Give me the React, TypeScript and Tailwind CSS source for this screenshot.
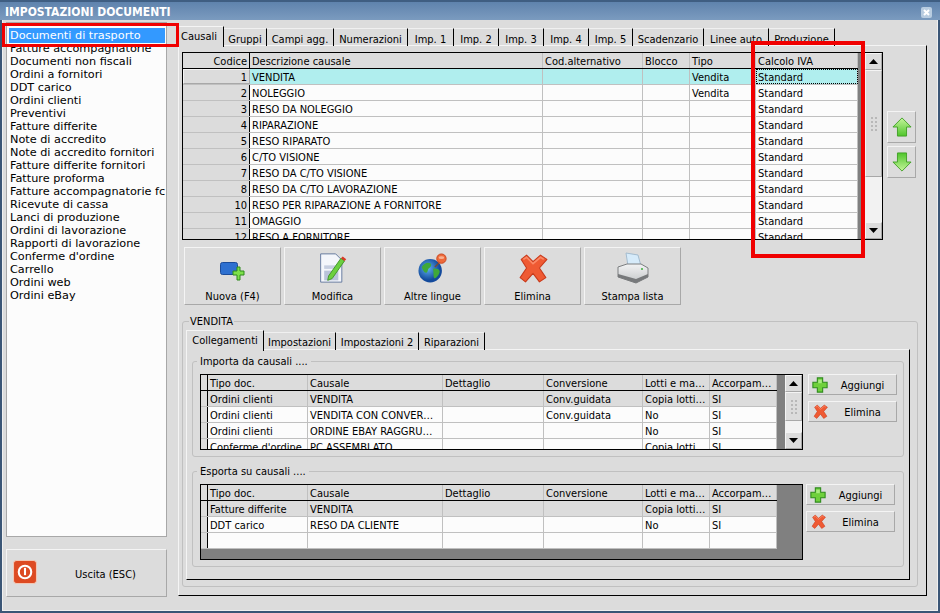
import React from "react";

const docs = ["Fatture accompagnatorie","Documenti non fiscali","Ordini a fornitori","DDT carico","Ordini clienti","Preventivi","Fatture differite","Note di accredito","Note di accredito fornitori","Fatture differite fornitori","Fatture proforma","Fatture accompagnatorie fc","Ricevute di cassa","Lanci di produzione","Ordini di lavorazione","Rapporti di lavorazione","Conferme d'ordine","Carrello","Ordini web","Ordini eBay"];
const tabs: [string, number][] = [["Causali",46],["Gruppi",43],["Campi agg.",67],["Numerazioni",74],["Imp. 1",46],["Imp. 2",45],["Imp. 3",45],["Imp. 4",45],["Imp. 5",44],["Scadenzario",71],["Linee auto",65],["Produzione",66]];
const inner: [string, number][] = [["Collegamenti",78],["Impostazioni",72],["Impostazioni 2",83],["Riparazioni",66]];
const rows: [string,string,string,string][] = [["1","VENDITA","Vendita","Standard"],["2","NOLEGGIO","Vendita","Standard"],["3","RESO DA NOLEGGIO","","Standard"],["4","RIPARAZIONE","","Standard"],["5","RESO RIPARATO","","Standard"],["6","C/TO VISIONE","","Standard"],["7","RESO DA C/TO VISIONE","","Standard"],["8","RESO DA C/TO LAVORAZIONE","","Standard"],["10","RESO PER RIPARAZIONE A FORNITORE","","Standard"],["11","OMAGGIO","","Standard"],["12","RESO A FORNITORE","","Standard"]];
const sub1 = [["Ordini clienti","VENDITA","","Conv.guidata","Copia lotti…","SI"],["Ordini clienti","VENDITA CON CONVER…","","Conv.guidata","No","SI"],["Ordini clienti","ORDINE EBAY RAGGRU…","","","No","SI"],["Conferme d'ordine","PC ASSEMBLATO","","","Copia lotti…","SI"]];
const sub2 = [["Fatture differite","VENDITA","","","Copia lotti…","SI"],["DDT carico","RESO DA CLIENTE","","","No","SI"],["","","","","",""]];
const subHead = ["Tipo doc.","Causale","Dettaglio","Conversione","Lotti e ma…","Accorpam…"];
const subW = [100,135,101,99,67,67];
const topW = [67,293,100,47,66,102];
const raised = "border border-t-[#f4f4f4] border-l-[#f4f4f4] border-r-[#a8a8a8] border-b-[#a8a8a8] bg-[#dcdcdc]";

function Plus({s=18}:{s?:number}){return <svg width={s} height={s} viewBox="0 0 18 18"><path d="M6 1h6v5h5v6h-5v5H6v-5H1V6h5z" fill="#6fd03c" stroke="#2e8a1c" strokeWidth="1.2"/><path d="M7 3h4v4h-4z" fill="#a8ec80"/></svg>;}
function Cross({s=18}:{s?:number}){return <svg width={s} height={s} viewBox="0 0 28 28"><path d="M3 6L8 2L14 8L21 2L27 6L20 14L26 23L20 27L14 19L7 27L2 23L8 14Z" fill="#ef5a33" stroke="#c8391a" strokeWidth="1" strokeLinejoin="round"/><path d="M5 6L8 4L14 10L21 4L24 6" fill="none" stroke="#fb8a68" strokeWidth="1.5"/></svg>;}
function Arrow({down}:{down?:boolean}){return <svg width="20" height="20" viewBox="0 0 22 22" style={down?{transform:"scaleY(-1)"}:undefined}><defs><linearGradient id="ga" x1="0" y1="0" x2="0" y2="1"><stop offset="0" stopColor="#c6f59c"/><stop offset="1" stopColor="#4fc52b"/></linearGradient></defs><path d="M11 1l10 10h-5v10H6V11H1z" fill="url(#ga)" stroke="#3f9f24"/></svg>;}
function Scroll({h,thumbTop,thumbH}:{h:number;thumbTop:number;thumbH:number}){return(
  <div className="w-[18px] flex flex-col bg-[#f2f2f2] shrink-0 relative border-l border-[#808080]" style={{height:h}}>
    <div className={`${raised} h-[17px] flex items-center justify-center`}><svg width="9" height="5"><path d="M4.5 0L9 5H0z" fill="#000"/></svg></div>
    <div className="flex-1 flex flex-col"><div style={{height:thumbTop}}/><div className={`${raised} flex items-center justify-center`} style={{height:thumbH}}><div className="grid grid-cols-2 gap-[2px]">{Array.from({length:8}).map((_,i)=><div key={i} className="w-[2px] h-[2px] bg-[#b8b8b8]"/>)}</div></div></div>
    <div className={`${raised} h-[17px] flex items-center justify-center`}><svg width="9" height="5"><path d="M4.5 5L9 0H0z" fill="#000"/></svg></div>
  </div>);}
function SmallBtn({icon,label}:{icon:React.ReactNode;label:string}){return <div className={`${raised} w-[89px] h-[21px] flex items-center relative`}><span className="ml-[3px] w-[16px] flex justify-center">{icon}</span><span className="flex-1 text-center pl-[1px] pt-[2px]">{label}</span></div>;}
function SubGrid({data,scroll}:{data:string[][];scroll:boolean}){return(
  <div className="flex w-[603px] h-[76px] border border-black bg-[#808080] overflow-hidden shrink-0">
    <div className="w-[576px] shrink-0 h-[74px] overflow-hidden">
      <div className="flex h-[16px] border-b border-black bg-[#dcdcdc]"><div className="w-[7px] border-r border-black shrink-0"/>{subHead.map((t,i)=><div key={i} className="border-r border-[#c0c0c0] px-[2px] pt-[1px] overflow-hidden whitespace-nowrap shrink-0" style={{width:subW[i]}}>{t}</div>)}</div>
      {data.map((r,j)=><div key={j} className={`flex h-[16px] border-b border-[#c0c0c0] ${j===0?"bg-[#dcdcdc]":"bg-[#fcfcfc]"}`}><div className="w-[7px] border-r border-black shrink-0 bg-[#dcdcdc]"/>{r.map((t,i)=><div key={i} className="border-r border-[#c0c0c0] px-[2px] pt-[1px] overflow-hidden whitespace-nowrap shrink-0" style={{width:subW[i]}}>{t}</div>)}</div>)}
    </div>
    <div className="flex-1"/>
    {scroll && <Scroll h={74} thumbTop={0} thumbH={29}/>}
  </div>);}
function Group({title,children}:{title:string;children:React.ReactNode}){return <fieldset className="border border-[#c0c0c0] rounded-[3px] w-[712px] h-[103px] pl-[7px] pt-[5px] shrink-0"><legend className="-ml-[3px] px-[3px]">{title}</legend>{children}</fieldset>;}

export default function App(){return(
<div className="w-[940px] h-[613px] flex flex-col bg-[#3b5676] text-[11px] leading-[15px] text-black overflow-hidden relative" style={{fontFamily:'"DejaVu Sans Condensed","DejaVu Sans",sans-serif'}}>
  <div className="h-[20px] shrink-0 flex items-center justify-between pl-[5px] pr-[8px] bg-gradient-to-b from-[#5f83ad] to-[#7b9bbf] border-t-2 border-[#3f5e82]">
    <span className="text-white font-bold text-[12px] pt-[2px]">IMPOSTAZIONI DOCUMENTI</span>
    <svg className="mt-[2px]" width="11" height="11" viewBox="0 0 11 11"><rect width="11" height="11" rx="2" fill="#b8cce0"/><path d="M3 3l5 5M8 3l-5 5" stroke="#fff" strokeWidth="2"/></svg>
  </div>
  <div className="flex-1 mx-[2px] mb-[2px] bg-[#dcdcdc] flex pt-[2px] pl-[3px] pr-[10px] border-x border-b border-[#f0f0f0]">
    <div className="w-[161px] shrink-0 flex flex-col">
      <div className="h-[515px] shrink-0 bg-[#fcfcfc] border border-[#a8a8a8] pt-[5px] pl-[2px] overflow-hidden text-[11.25px]" style={{fontFamily:'"DejaVu Sans",sans-serif'}}>
        <div className="h-[15px] -mb-[1px] mr-[1px] bg-[#3399ff] text-white pl-[1px] leading-[15px] relative z-10 whitespace-nowrap">Documenti di trasporto</div>
        {docs.map(d=><div key={d} className="h-[13px] leading-[13px] pl-[1px] whitespace-nowrap overflow-hidden">{d}</div>)}
      </div>
      <div className={`${raised} mt-[12px] h-[48px] shrink-0 flex items-center pl-[6px]`}>
        <svg className="-mt-[2px]" width="24" height="24" viewBox="0 0 23 23"><rect x="0.5" y="0.5" width="22" height="22" rx="3" fill="#dd4a22" stroke="#f2c6b4"/><circle cx="11.5" cy="11.5" r="6" fill="none" stroke="#fff" strokeWidth="2"/><path d="M11.5 7.5v7" stroke="#fff" strokeWidth="2"/></svg>
        <span className="flex-1 text-center pl-[8px] pt-[2px]">Uscita (ESC)</span>
      </div>
    </div>
    <div className="ml-[11px] w-[749px] flex flex-col pt-[4px] pb-[14px]">
      <div className="flex h-[20px] shrink-0 -mb-[1px] relative z-10">
        {tabs.map(([t,w],i)=><div key={t} className={`text-center whitespace-nowrap shrink-0 border-r border-black ${i===0?"bg-[#dcdcdc] border-t border-l border-t-[#f4f4f4] border-l-[#f4f4f4] h-[21px] pt-[2px] text-left pl-[2px]":"mt-[2px] pt-[3px] border-t border-t-[#f0f0f0]"}`} style={{width:w}}>{t}</div>)}
      </div>
      <div className="flex-1 border border-t-[#f4f4f4] border-l-[#f4f4f4] border-r-black border-b-black pl-[3px] pt-[6px] flex flex-col">
        <div className="flex gap-[4px] shrink-0">
          <div className="w-[701px] h-[188px] border border-black bg-[#808080] flex overflow-hidden">
            <div className="w-[675px] shrink-0">
              <div className="flex h-[16px] bg-[#dcdcdc] border-b border-black">{["Codice","Descrizione causale","Cod.alternativo","Blocco","Tipo","Calcolo IVA"].map((t,i)=><div key={t} className={`shrink-0 px-[2px] pt-[1px] whitespace-nowrap ${i===0?"text-right border-r border-black":"border-r border-[#c0c0c0]"}`} style={{width:topW[i]}}>{t}</div>)}</div>
              {rows.map((r,j)=>{const vals=[r[0],r[1],"","",r[2],r[3]];return <div key={j} className={`flex h-[16px] border-b border-[#c0c0c0] ${j===0?"bg-[#b0eeee]":"bg-[#fcfcfc]"}`}>{vals.map((t,i)=><div key={i} className={`shrink-0 whitespace-nowrap overflow-hidden ${i===0?`text-right px-[2px] pt-0 border-r border-black ${j===0?raised:"pt-[1px] bg-[#dcdcdc]"}`:"px-[2px] pt-[1px] border-r border-[#c0c0c0]"} ${i===5&&j===0?"outline outline-1 outline-dotted outline-black -outline-offset-1":""}`} style={{width:topW[i]}}>{t}</div>)}</div>;})}
            </div>
            <div className="flex-1"/>
            <Scroll h={186} thumbTop={0} thumbH={107}/>
          </div>
          <div className="w-[29px] pt-[59px] flex flex-col gap-[3px]">
            <div className={`${raised} h-[32px] flex items-center justify-center`}><Arrow/></div>
            <div className={`${raised} h-[32px] flex items-center justify-center`}><Arrow down/></div>
          </div>
        </div>
        <div className="flex gap-[3px] mt-[7px] ml-[2px] shrink-0">
          {[
            ["Nuova (F4)",<svg key="a" className="mt-[7px]" width="25" height="19" viewBox="0 0 25 19"><rect x="0.5" y="0.5" width="17" height="12" rx="2" fill="#2e70d0" stroke="#1c4c9a"/><path d="M14 7h4V3h3v4h4v4h-4v5h-3v-5h-4z" transform="translate(-1 2)" fill="#7de04a" stroke="#2e8a1c"/></svg>],
            ["Modifica",<svg key="b" width="28" height="30" viewBox="0 0 30 34"><path d="M1 1h17l7 7v25H1z" fill="#f4f6fb" stroke="#5a7099"/><rect x="5" y="14" width="16" height="4" fill="#c6cee0"/><rect x="5" y="20" width="16" height="11" fill="#b9c3da"/><path d="M10 26L24 6l4 3-14 20-5 2z" fill="#6cd040" stroke="#3a8f22"/><path d="M24 6l2-2 4 3-2 2z" fill="#d83a26"/></svg>],
            ["Altre lingue",<svg key="c" width="30" height="30" viewBox="0 0 32 32"><defs><radialGradient id="gl" cx="0.4" cy="0.4"><stop offset="0" stopColor="#5fb0f0"/><stop offset="1" stopColor="#134a9c"/></radialGradient></defs><circle cx="13" cy="19" r="12.5" fill="url(#gl)"/><path d="M4 15c3-5 7-5 9-4s1 4-1 5-1 4-3 5-4-3-5-6zM16 17c3-1 6 0 7 2s-3 8-5 8-1-6-2-10z" fill="#3fa83a"/><path d="M18 15l6-6" stroke="#7a4a30" strokeWidth="1.5"/><circle cx="25" cy="6" r="5" fill="#ee6a3a" stroke="#c8441e"/><ellipse cx="25" cy="5" rx="3" ry="1.5" fill="#f8b090"/></svg>],
            ["Elimina",<Cross key="d" s={30}/>],
            ["Stampa lista",<svg key="e" width="32" height="32" viewBox="0 0 32 32"><defs><linearGradient id="pr" x1="0" y1="0" x2="0" y2="1"><stop offset="0" stopColor="#f2f3f4"/><stop offset="1" stopColor="#c4c6c8"/></linearGradient></defs><path d="M9 1l12 2 3 11H11z" fill="#d6ebfa" stroke="#a4bccf"/><path d="M1 15l9-3h14l7 4v9l-12 6-18-6z" fill="url(#pr)" stroke="#7c7e80"/><path d="M1 22l18 5 12-5v3l-12 6-18-6z" fill="#77797b"/><circle cx="25" cy="17" r="1" fill="#3fb03a"/></svg>],
          ].map(([l,ic],i)=><div key={i} className={`${raised} w-[97px] h-[58px] flex flex-col items-center`}><div className="h-[38px] flex items-center justify-center mt-[1px]">{ic as React.ReactNode}</div><div className="mt-[2px]">{l as string}</div></div>)}
        </div>
        <fieldset className="mt-[9px] w-[736px] h-[273px] shrink-0 border border-[#c0c0c0] rounded-[3px] pl-[3px] ml-0"><legend className="ml-[3px] px-[1px]">VENDITA</legend>
          <div className="flex h-[20px] mt-[1px] relative z-10 -mb-[1px]">
            {inner.map(([t,w],i)=><div key={t} className={`shrink-0 text-center whitespace-nowrap border-r border-black ${i===0?"h-[21px] pt-[2px] border-t border-l border-t-[#f4f4f4] border-l-[#f4f4f4] bg-[#dcdcdc]":"mt-[2px] pt-[2px] border-t border-t-[#f0f0f0]"}`} style={{width:w}}>{t}</div>)}
          </div>
          <div className="w-[724px] h-[231px] border border-t-[#f4f4f4] border-l-[#f4f4f4] border-r-black border-b-black pl-[5px] pt-[4px] flex flex-col gap-[7px]">
            <Group title="Importa da causali ....">
              <div className="flex gap-[5px]"><SubGrid data={sub1} scroll/><div className="flex flex-col gap-[6px]"><SmallBtn icon={<Plus s={16}/>} label="Aggiungi"/><SmallBtn icon={<Cross s={15}/>} label="Elimina"/></div></div>
            </Group>
            <Group title="Esporta su causali ....">
              <div className="flex gap-[3px]"><SubGrid data={sub2} scroll={false}/><div className="flex flex-col gap-[6px]"><SmallBtn icon={<Plus s={16}/>} label="Aggiungi"/><SmallBtn icon={<Cross s={15}/>} label="Elimina"/></div></div>
            </Group>
          </div>
        </fieldset>
      </div>
    </div>
  </div>
  <div className="absolute left-[2px] top-[23px] w-[177px] h-[24px] border-[3px] border-[#f00000] z-20"/>
  <div className="absolute left-[751px] top-[41px] w-[114px] h-[217px] border-[4px] border-[#f00000] z-20"/>
</div>);}
